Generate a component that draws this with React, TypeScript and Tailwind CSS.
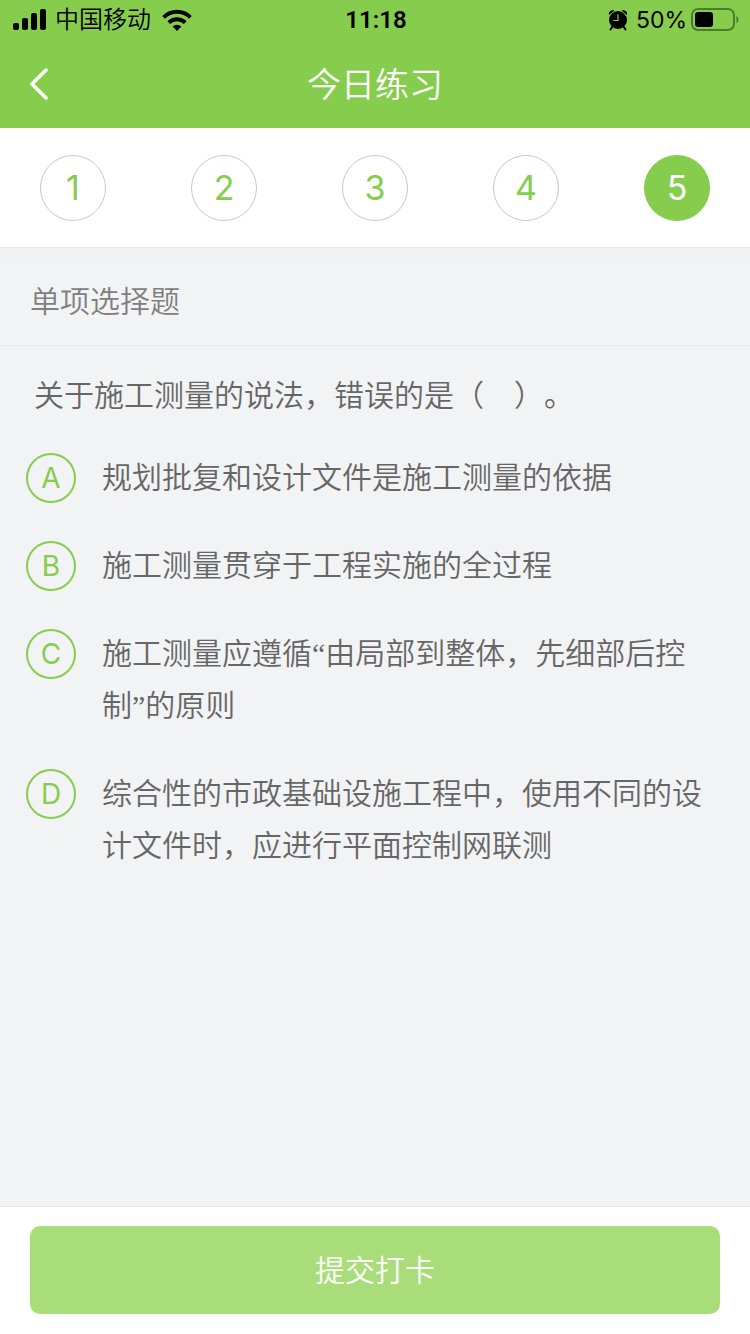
import { useState } from 'react';
import clsx from 'clsx';

const steps = [1, 2, 3, 4, 5];

const options = [
  { key: 'A', text: '规划批复和设计文件是施工测量的依据' },
  { key: 'B', text: '施工测量贯穿于工程实施的全过程' },
  { key: 'C', text: '施工测量应遵循“由局部到整体，先细部后控制”的原则' },
  { key: 'D', text: '综合性的市政基础设施工程中，使用不同的设计文件时，应进行平面控制网联测' },
];

function SignalIcon() {
  return (
    <svg width="34" height="22" viewBox="0 0 34 22" aria-hidden="true">
      <rect x="0" y="14" width="6" height="7" rx="2" />
      <rect x="9" y="9" width="6" height="12" rx="2" />
      <rect x="18" y="4" width="6" height="17" rx="2" />
      <rect x="27" y="0" width="6" height="21" rx="2" />
    </svg>
  );
}

function WifiIcon() {
  return (
    <svg width="30" height="22" viewBox="0 0 30 22" fill="none" stroke="#000" strokeWidth="4" aria-hidden="true">
      <path d="M1.6 8.4a19 19 0 0 1 26.8 0" />
      <path d="M6.8 13.6a11.6 11.6 0 0 1 16.4 0" />
      <path d="M15 22l-4.4-4.5a6.2 6.2 0 0 1 8.8 0z" fill="#000" stroke="none" />
    </svg>
  );
}

function AlarmIcon() {
  return (
    <svg width="20" height="22" viewBox="0 0 20 22" aria-hidden="true">
      <path d="M1 6C0 3 3 0.5 6.5 1.5zM19 6C20 3 17 0.5 13.5 1.5z" />
      <circle cx="10" cy="11" r="9" />
      <path d="M4.5 17.5L2.5 20.5M15.5 17.5l2 3" stroke="#000" strokeWidth="2" strokeLinecap="round" />
      <path d="M10 5.5V11.5H5.5" fill="none" stroke="#86cd4d" strokeWidth="1.2" strokeLinecap="round" />
    </svg>
  );
}

function BatteryIcon() {
  return (
    <svg width="48" height="24" viewBox="0 0 48 24" aria-hidden="true">
      <rect x="1" y="1" width="42" height="21" rx="6" fill="none" stroke="#000" strokeOpacity="0.4" strokeWidth="2" />
      <rect x="4" y="4" width="18" height="15" rx="3" />
      <path d="M45.5 8c2.6 1.5 2.6 5.5 0 7z" fillOpacity="0.45" />
    </svg>
  );
}

export default function App() {
  const [current, setCurrent] = useState(5);
  const [answer, setAnswer] = useState('');

  return (
    <div className="flex min-h-screen flex-col bg-[#f2f3f5] font-['Inter','Noto_Sans_CJK_SC',sans-serif] font-[350]">
      <header className="bg-[#86cd4d]">
        {/* Status bar */}
        <div className="grid h-10 grid-cols-3 items-center pl-[13px] pr-[11px] text-2xl text-black">
          <div className="flex items-center gap-2">
            <SignalIcon />
            <span className="whitespace-nowrap pr-[3px]">中国移动</span>
            <WifiIcon />
          </div>
          <span className="text-center font-['Roboto',sans-serif] font-semibold">11:18</span>
          <div className="flex items-center justify-end gap-1">
            <AlarmIcon />
            <span className="pl-1 text-[23px] font-normal">50%</span>
            <BatteryIcon />
          </div>
        </div>

        {/* Title bar */}
        <div className="grid h-[88px] grid-cols-3 items-center px-7">
          <button type="button" aria-label="返回" className="justify-self-start">
            <svg width="22" height="32" viewBox="0 0 22 32" fill="none" stroke="#fff" strokeWidth="3.5" strokeLinecap="round">
              <path d="M18 2L4 16l14 14" />
            </svg>
          </button>
          <h1 className="text-center text-[34px] font-[350] text-white">今日练习</h1>
        </div>
      </header>

      {/* Question numbers */}
      <nav className="flex h-[120px] items-center justify-between border-b border-[#e6e6e6] bg-white px-10">
        {steps.map((step) => (
          <button
            key={step}
            type="button"
            onClick={() => setCurrent(step)}
            className={clsx(
              'size-[66px] rounded-full border text-[34px] font-normal',
              step === current
                ? 'border-[#86cd4d] bg-[#86cd4d] text-white'
                : 'border-[#c8c8c8] bg-white text-[#86cd4d]'
            )}
          >
            {step}
          </button>
        ))}
      </nav>

      <main className="flex-1">
        <h2 className="flex h-[98px] items-center border-b border-[#e9eaec] border-t-10 border-t-[#f1f1f2] px-[30px] text-[30px] font-[350] text-[#808080]">
          单项选择题
        </h2>

        <fieldset className="pb-9 pl-[26px] pr-10 pt-6 font-['Liberation_Serif','Noto_Sans_CJK_SC',sans-serif] text-[30px] leading-[52px] text-[#666] [text-spacing-trim:space-all]">
          <legend className="contents">
            <span className="mb-[30px] block px-2">关于施工测量的说法，错误的是（　）。</span>
          </legend>
          <div className="flex flex-col gap-9">
            {options.map((option) => (
              <label key={option.key} className="relative flex cursor-pointer items-start gap-[26px]">
                <input
                  type="radio"
                  name="answer"
                  value={option.key}
                  checked={answer === option.key}
                  onChange={() => setAnswer(option.key)}
                  className="peer sr-only"
                />
                <span className="my-px flex size-[50px] shrink-0 items-center justify-center rounded-full border-2 border-[#86cd4d] font-['Inter',sans-serif] text-[28px] font-normal text-[#86cd4d] peer-checked:bg-[#86cd4d] peer-checked:text-white">
                  {option.key}
                </span>
                <span>{option.text}</span>
              </label>
            ))}
          </div>
        </fieldset>
      </main>

      <footer className="border-t border-[#e6e6e6] bg-white px-[30px] pb-5 pt-[19px]">
        <button type="button" className="h-[88px] w-full rounded-[10px] bg-[#a9dd7a] text-[30px] text-white">
          提交打卡
        </button>
      </footer>
    </div>
  );
}
